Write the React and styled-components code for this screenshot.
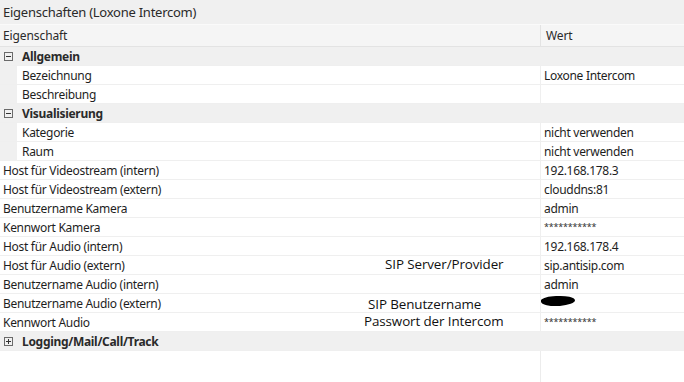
import React from "react";
import styled, { createGlobalStyle } from "styled-components";

const Global = createGlobalStyle`
  html, body { margin: 0; padding: 0; background: #fff; }
  body { font-family: "Noto Sans", "Open Sans", sans-serif; font-size: 12px; color: #1e1e1e; }
`;

const Page = styled.div`
  position: relative;
  width: 684px;
  height: 382px;
  overflow: hidden;
  background: #fff;
  display: flex;
  flex-direction: column;
`;

const TitleBar = styled.div`
  height: 24px;
  flex: none;
  background: #f0f0f0;
  border-bottom: 1px solid #fafafa;
  display: flex;
  align-items: center;
  padding-left: 3px;
  font-size: 13px;
  letter-spacing: -0.25px;
  color: #2a2a2a;
`;

const Grid = styled.div`
  display: grid;
  grid-template-columns: 540px 1fr;
  flex: none;
`;

const HeadCell = styled.div`
  height: 21px;
  background: #f5f5f5;
  border-bottom: 1px solid #e3e3e3;
  border-left: ${p => (p.$first ? "none" : "1px solid #e3e3e3")};
  display: flex;
  align-items: center;
  padding-left: ${p => (p.$first ? "3px" : "5px")};
  letter-spacing: -0.1px;
  color: #2a2a2a;
`;

const Cell = styled.div`
  height: 18px;
  border-bottom: 1px solid #efefef;
  border-left: ${p => (p.$value ? "1px solid #efefef" : "none")};
  background: ${p => (p.$group ? "#f0f0f0" : "#fff")};
  display: flex;
  align-items: center;
  padding-left: ${p => (p.$value ? "3px" : "0")};
  white-space: nowrap;
  letter-spacing: -0.3px;
  font-weight: ${p => (p.$group ? 700 : 400)};
  color: ${p => (p.$group ? "#2a2a2a" : "#1e1e1e")};
`;

const Indent = styled.div`
  width: ${p => p.$w}px;
  align-self: stretch;
  background: #f0f0f0;
  flex: none;
`;

const Label = styled.span`
  padding-left: ${p => p.$pad}px;
`;

const Masked = styled.span`
  font-size: 9px;
  letter-spacing: -0.2px;
  align-self: flex-start;
  margin-top: 2px;
  color: #333;
`;

const ToggleBox = styled.span`
  box-sizing: border-box;
  width: 9px;
  height: 9px;
  border: 1px solid #6a6a6a;
  margin-left: 4px;
  margin-right: 9px;
  position: relative;
  flex: none;
  &::before {
    content: "";
    position: absolute;
    left: 1px;
    right: 1px;
    top: 3px;
    height: 1px;
    background: #333;
  }
  &::after {
    content: "";
    display: ${p => (p.$open ? "none" : "block")};
    position: absolute;
    top: 1px;
    bottom: 1px;
    left: 3px;
    width: 1px;
    background: #333;
  }
`;

const Filler = styled.div`
  flex: 1;
  display: grid;
  grid-template-columns: 540px 1fr;
`;

const FillCol = styled.div`
  border-left: ${p => (p.$value ? "1px solid #ececec" : "none")};
`;

const Note = styled.div`
  position: absolute;
  left: ${p => p.$x}px;
  top: ${p => p.$y}px;
  font-family: "Open Sans", "Noto Sans", sans-serif;
  font-size: 13.4px;
  color: #111;
  white-space: nowrap;
  letter-spacing: -0.1px;
`;

const Blob = styled.div`
  position: absolute;
  left: 541px;
  top: 296px;
  width: 34px;
  height: 10px;
  background: #000;
  border-radius: 40% 60% 50% 60%;
  transform: rotate(-4deg);
`;

const rows = [
  { type: "group", label: "Allgemein", open: true },
  { type: "child", label: "Bezeichnung", value: "Loxone Intercom" },
  { type: "child", label: "Beschreibung", value: "" },
  { type: "group", label: "Visualisierung", open: true },
  { type: "child", label: "Kategorie", value: "nicht verwenden" },
  { type: "child", label: "Raum", value: "nicht verwenden" },
  { type: "top", label: "Host für Videostream (intern)", value: "192.168.178.3" },
  { type: "top", label: "Host für Videostream (extern)", value: "clouddns:81" },
  { type: "top", label: "Benutzername Kamera", value: "admin" },
  { type: "top", label: "Kennwort Kamera", value: "***********", masked: true },
  { type: "top", label: "Host für Audio (intern)", value: "192.168.178.4" },
  { type: "top", label: "Host für Audio (extern)", value: "sip.antisip.com" },
  { type: "top", label: "Benutzername Audio (intern)", value: "admin" },
  { type: "top", label: "Benutzername Audio (extern)", value: "" },
  { type: "top", label: "Kennwort Audio", value: "***********", masked: true },
  { type: "group", label: "Logging/Mail/Call/Track", open: false },
];

function Row({ r }) {
  if (r.type === "group") {
    return (
      <>
        <Cell $group>
          <ToggleBox $open={r.open} />
          <span>{r.label}</span>
        </Cell>
        <Cell $group />
      </>
    );
  }
  return (
    <>
      <Cell>
        {r.type === "child" ? <Indent $w={17} /> : null}
        <Label $pad={r.type === "child" ? 5 : 3}>{r.label}</Label>
      </Cell>
      <Cell $value>{r.masked ? <Masked>{r.value}</Masked> : r.value}</Cell>
    </>
  );
}

export default function App() {
  return (
    <>
      <Global />
      <Page>
        <TitleBar>Eigenschaften (Loxone Intercom)</TitleBar>
        <Grid>
          <HeadCell $first>Eigenschaft</HeadCell>
          <HeadCell>Wert</HeadCell>
          {rows.map((r, i) => (
            <Row key={i} r={r} />
          ))}
        </Grid>
        <Filler>
          <FillCol />
          <FillCol $value />
        </Filler>
        <Note $x={385} $y={255}>SIP Server/Provider</Note>
        <Note $x={368} $y={295}>SIP Benutzername</Note>
        <Note $x={364} $y={312}>Passwort der Intercom</Note>
        <Blob />
      </Page>
    </>
  );
}
